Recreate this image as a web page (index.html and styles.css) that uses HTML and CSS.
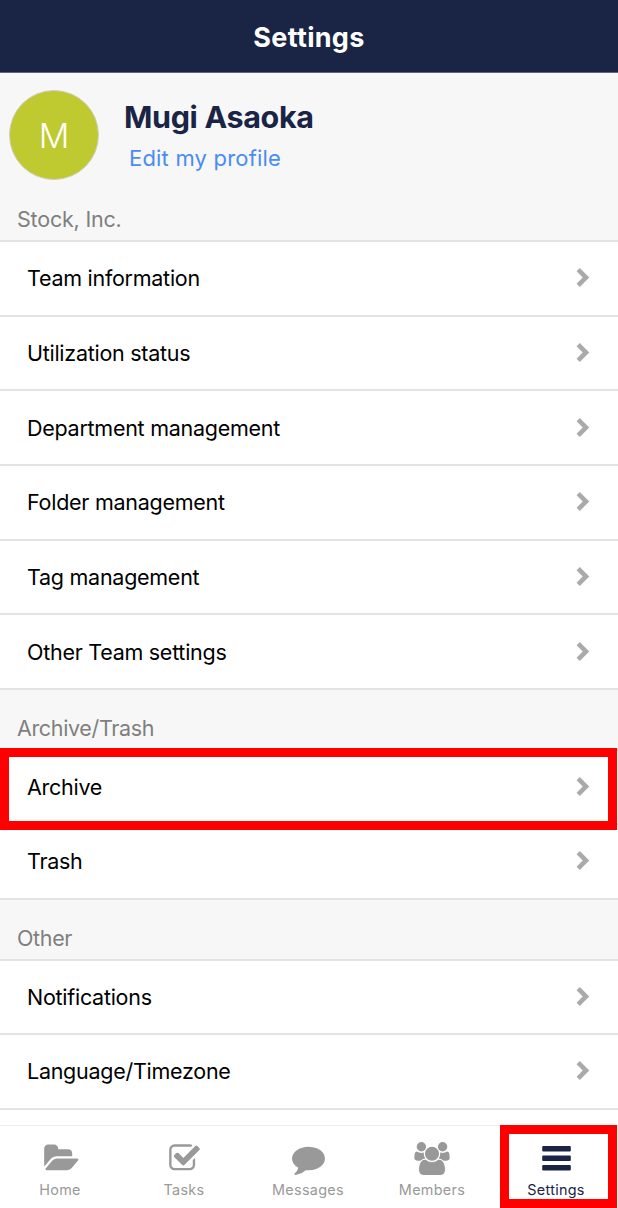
FILE: index.html
```html
<!DOCTYPE html>
<html lang="en">
  <head>
    <meta charset="utf-8">
    <title>Settings</title>
    <link rel="stylesheet" href="styles.css">
  </head>
  <body>
    <svg class="sprite" width="0" height="0">
      <symbol id="chevron" viewBox="0 0 14 22">
        <path d="M2.2 2.7L10 10.5L2.2 18.3" fill="none" stroke="currentColor" stroke-width="4.6"/>
      </symbol>
    </svg>
    <header class="header">
      <h1>Settings</h1>
    </header>
    <main>
      <section class="profile">
        <div class="avatar">M</div>
        <div class="profile-text">
          <h2>Mugi Asaoka</h2>
          <a class="edit">Edit my profile</a>
        </div>
      </section>

      <h3 class="first">Stock, Inc.</h3>
      <ul>
        <li>Team information <svg class="chevron"><use href="#chevron"/></svg></li>
        <li>Utilization status <svg class="chevron"><use href="#chevron"/></svg></li>
        <li>Department management <svg class="chevron"><use href="#chevron"/></svg></li>
        <li>Folder management <svg class="chevron"><use href="#chevron"/></svg></li>
        <li>Tag management <svg class="chevron"><use href="#chevron"/></svg></li>
        <li>Other Team settings <svg class="chevron"><use href="#chevron"/></svg></li>
      </ul>

      <h3>Archive/Trash</h3>
      <ul>
        <li class="marked">Archive <svg class="chevron"><use href="#chevron"/></svg></li>
        <li>Trash <svg class="chevron"><use href="#chevron"/></svg></li>
      </ul>

      <h3>Other</h3>
      <ul>
        <li>Notifications <svg class="chevron"><use href="#chevron"/></svg></li>
        <li>Language/Timezone <svg class="chevron"><use href="#chevron"/></svg></li>
      </ul>
    </main>

    <nav class="tabs">
      <a class="tab">
        <svg width="35" height="33" viewBox="0 0 1920 1792"><path d="M1943 952q0 31-31 66l-336 396q-43 51-120.5 86.5t-143.5 35.5h-1088q-34 0-60.5-13t-26.5-43q0-31 31-66l336-396q43-51 120.5-86.5t143.5-35.5h1088q34 0 60.5 13t26.5 43zm-343-344v160h-832q-94 0-197 47.5t-164 119.5l-337 396-5 6q0-4-.5-12.5t-.5-12.5v-960q0-92 66-158t158-66h320q92 0 158 66t66 158v32h544q92 0 158 66t66 158z"/></svg>
        <span>Home</span>
      </a>
      <a class="tab">
        <svg width="33" height="33" viewBox="0 0 1792 1792"><path d="M1472 930v318q0 119-84.5 203.5t-203.5 84.5h-832q-119 0-203.5-84.5t-84.5-203.5v-832q0-119 84.5-203.5t203.5-84.5h832q63 0 117 25 15 7 18 23 3 17-9 29l-49 49q-10 10-23 10-3 0-9-2-23-6-45-6h-832q-66 0-113 47t-47 113v832q0 66 47 113t113 47h832q66 0 113-47t47-113v-254q0-13 9-22l64-64q10-10 23-10 6 0 12 3 20 8 20 29zm231-489l-814 814q-24 24-57 24t-57-24l-430-430q-24-24-24-57t24-57l110-110q24-24 57-24t57 24l263 263 647-647q24-24 57-24t57 24l110 110q24 24 24 57t-24 57z"/></svg>
        <span>Tasks</span>
      </a>
      <a class="tab">
        <svg width="33" height="33" viewBox="0 0 1792 1792"><path d="M1792 896q0 174-120 321.5t-326 233-450 85.5q-70 0-145-8-198 175-460 242-49 14-114 22-17 2-30.5-9t-17.5-29v-1q-3-4-.5-12t2-10 4.5-9.5l6-9 7-8.5 8-9q7-8 31-34.5t34.5-38 31-39.5 32.5-51 27-59 26-76q-157-89-247.5-220t-90.5-281q0-130 71-248.5t191-204.5 286-136.5 348-50.5q244 0 450 85.5t326 233 120 321.5z"/></svg>
        <span>Messages</span>
      </a>
      <a class="tab">
        <svg width="36" height="33" viewBox="0 0 1920 1792"><path d="M593 896q-162 5-265 128h-134q-82 0-138-40.5t-56-118.5q0-353 124-353 6 0 43.5 21t97.5 42.5 119 21.5q67 0 133-23-5 37-5 66 0 139 81 256zm1071 637q0 120-73 189.5t-194 69.5h-874q-121 0-194-69.5t-73-189.5q0-53 3.5-103.5t14-109 26.5-108.5 43-97.5 62-81 85.5-53.5 111.5-20q10 0 43 21.5t73 48 107 48 135 21.5 135-21.5 107-48 73-48 43-21.5q61 0 111.5 20t85.5 53.5 62 81 43 97.5 26.5 108.5 14 109 3.5 103.5zm-1024-1277q0 106-75 181t-181 75-181-75-75-181 75-181 181-75 181 75 75 181zm704 384q0 159-112.5 271.5t-271.5 112.5-271.5-112.5-112.5-271.5 112.5-271.5 271.5-112.5 271.5 112.5 112.5 271.5zm576 225q0 78-56 118.5t-138 40.5h-134q-103-123-265-128 81-117 81-256 0-29-5-66 66 23 133 23 59 0 119-21.5t97.5-42.5 43.5-21q124 0 124 353zm-128-609q0 106-75 181t-181 75-181-75-75-181 75-181 181-75 181 75 75 181z"/></svg>
        <span>Members</span>
      </a>
      <a class="tab active marked">
        <svg width="29" height="33" viewBox="0 0 29 33"><path d="M1.2 4h26.6q1 0 1 1v3.4q0 1-1 1H1.2q-1 0-1-1V5q0-1 1-1zM1.2 13.5h26.6q1 0 1 1v3.4q0 1-1 1H1.2q-1 0-1-1v-3.4q0-1 1-1zM1.2 23h26.6q1 0 1 1v3.4q0 1-1 1H1.2q-1 0-1-1V24q0-1 1-1z"/></svg>
        <span>Settings</span>
      </a>
    </nav>
  </body>
</html>
```
FILE: styles.css
```css
* {
  box-sizing: border-box;
}
body {
  margin: 0;
  height: 1208px;
  display: flex;
  flex-direction: column;
  overflow: hidden;
  font-family: Inter, "Liberation Sans", sans-serif;
  background-color: #fff;
  color: #000;
}
h1, h2, h3, ul {
  margin: 0;
  padding: 0;
}
.sprite {
  position: absolute;
}
.header {
  height: 73px;
  flex: none;
  display: flex;
  align-items: center;
  justify-content: center;
  background-color: #1a2444;
  border-bottom: 1px solid #60677d;
  color: #fff;
}
h1 {
  font-size: 27px;
  font-weight: 700;
  line-height: 32px;
  letter-spacing: 0.3px;
  padding-top: 3px;
}
main {
  flex: 1;
  min-height: 0;
}
.profile {
  height: 127px;
  padding: 17px 9px 0;
  display: flex;
  background-color: #f7f7f7;
}
.avatar {
  width: 90px;
  height: 90px;
  border: 1px solid #cfcfc0;
  border-radius: 50%;
  background-color: #bfca31;
  color: #fff;
  font-size: 34px;
  font-weight: 350;
  line-height: 89px;
  text-align: center;
}
.profile-text {
  padding: 7px 0 0 25px;
}
h2 {
  font-size: 30.5px;
  font-weight: 700;
  line-height: 40px;
  letter-spacing: -0.35px;
  color: #1a2444;
}
.edit {
  display: block;
  padding: 1px 0 0 5px;
  font-size: 22px;
  line-height: 40px;
  letter-spacing: 0.2px;
  color: #4a8cf0;
}
h3 {
  height: 58.7px;
  padding: 23px 17px 0;
  font-size: 21.5px;
  font-weight: 400;
  line-height: 30px;
  letter-spacing: -0.35px;
  background-color: #f7f7f7;
  color: #7f7f7f;
}
h3.first {
  height: 40px;
  padding-top: 4px;
  letter-spacing: -0.2px;
}
ul {
  list-style: none;
  border-top: 2px solid #e3e3e3;
}
li {
  position: relative;
  height: 74.65px;
  padding: 0 28px 0 27px;
  display: flex;
  align-items: center;
  justify-content: space-between;
  border-bottom: 2px solid #e3e3e3;
  font-size: 21.5px;
  letter-spacing: -0.27px;
}
.chevron {
  width: 14px;
  height: 22px;
  color: #aaa;
}
/* red frame round the highlighted entries */
.marked::after {
  content: "";
  position: absolute;
  border: 9px solid #f00;
}
li.marked::after {
  inset: -3px 1px -7px 0;
}
.tabs {
  height: 83px;
  flex: none;
  display: flex;
  justify-content: center;
  padding-right: 2px;
  border-top: 1px solid #ececec;
  background-color: #fff;
}
.tab {
  position: relative;
  width: 124px;
  flex: none;
  padding-top: 16px;
  display: flex;
  flex-direction: column;
  align-items: center;
  color: #999;
  font-size: 14.4px;
  letter-spacing: 0.3px;
}
.tab svg {
  fill: currentColor;
  overflow: visible;
}
.tab span {
  line-height: 18px;
  margin-top: 6px;
}
.tab.active {
  color: #1a2444;
}
.tab.marked::after {
  inset: -1px 1px 0 6px;
}
```
